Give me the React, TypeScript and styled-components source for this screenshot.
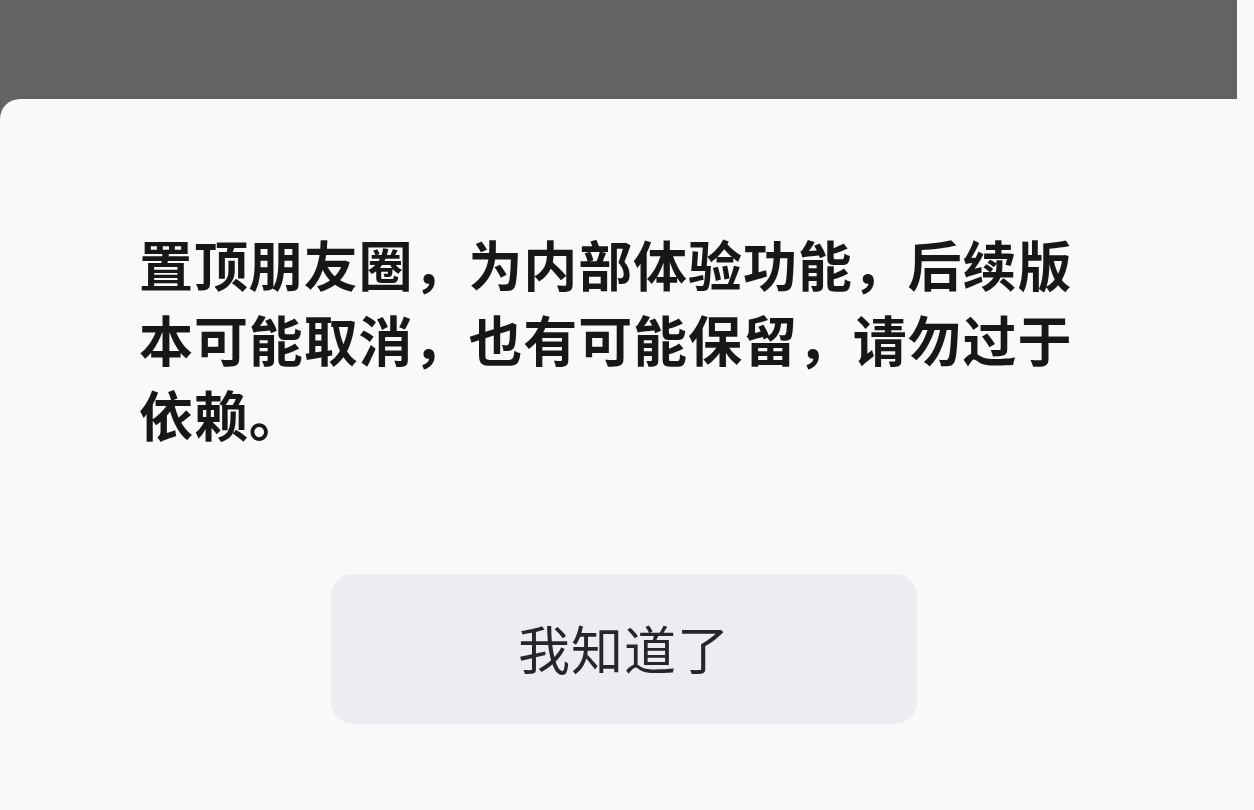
import React from "react";
import styled, { createGlobalStyle } from "styled-components";

const GlobalStyle = createGlobalStyle`
  html, body {
    margin: 0;
    padding: 0;
    background: #f9f9fb;
  }
  body {
    font-family: "Noto Sans CJK SC", "Noto Sans", sans-serif;
    overflow: hidden;
  }
`;

const Screen = styled.div`
  width: 1237px;
  height: 810px;
  background: #636366;
  padding-top: 99px;
  box-sizing: border-box;
  display: flex;
  flex-direction: column;
`;

const Sheet = styled.div`
  flex: 1;
  width: 1254px;
  background: #f9f9fb;
  border-top-left-radius: 20px;
  padding: 127px 0 0 139px;
  box-sizing: border-box;
  display: flex;
  flex-direction: column;
`;

const Message = styled.p`
  margin: 0;
  width: 945px;
  font-size: 54px;
  line-height: 75px;
  font-weight: 700;
  color: #17171a;
  letter-spacing: 0.9px;
`;

const Actions = styled.div`
  margin-top: 123px;
  padding-left: 192px;
  display: flex;
`;

const ConfirmButton = styled.button`
  width: 586px;
  height: 150px;
  border: none;
  border-radius: 22px;
  background: #ededf1;
  color: #26262a;
  font-family: inherit;
  font-size: 52px;
  font-weight: 400;
  letter-spacing: 1px;
  padding-bottom: 4px;
  cursor: pointer;
`;

export default function App() {
  return (
    <>
      <GlobalStyle />
      <Screen>
        <Sheet>
          <Message>
            置顶朋友圈，为内部体验功能，后续版本可能取消，也有可能保留，请勿过于依赖。
          </Message>
          <Actions>
            <ConfirmButton>我知道了</ConfirmButton>
          </Actions>
        </Sheet>
      </Screen>
    </>
  );
}
